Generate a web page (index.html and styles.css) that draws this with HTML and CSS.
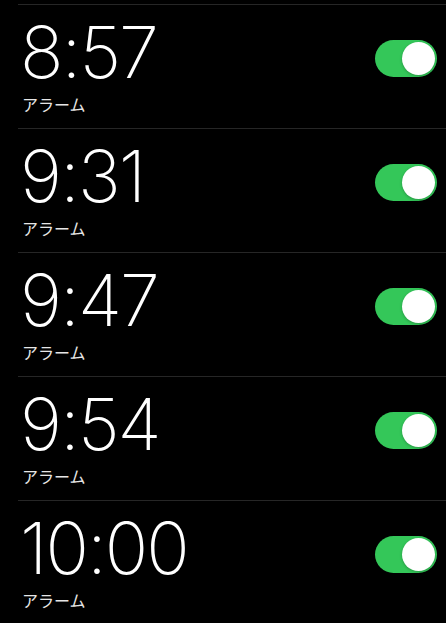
FILE: index.html
```html
<!DOCTYPE html>
<html lang="ja">
<head>
    <meta charset="UTF-8">
    <meta name="viewport" content="width=device-width, initial-scale=1.0">
    <title>アラーム</title>
    <link rel="stylesheet" href="styles.css">
</head>
<body>

<ul class="alarm-list">
    <li class="alarm">
        <div class="alarm-info">
            <div class="alarm-time">8:57</div>
            <div class="alarm-label">アラーム</div>
        </div>
        <span class="toggle on"><span class="knob"></span></span>
    </li>
    <li class="alarm">
        <div class="alarm-info">
            <div class="alarm-time">9:31</div>
            <div class="alarm-label">アラーム</div>
        </div>
        <span class="toggle on"><span class="knob"></span></span>
    </li>
    <li class="alarm">
        <div class="alarm-info">
            <div class="alarm-time">9:47</div>
            <div class="alarm-label">アラーム</div>
        </div>
        <span class="toggle on"><span class="knob"></span></span>
    </li>
    <li class="alarm">
        <div class="alarm-info">
            <div class="alarm-time">9:54</div>
            <div class="alarm-label">アラーム</div>
        </div>
        <span class="toggle on"><span class="knob"></span></span>
    </li>
    <li class="alarm">
        <div class="alarm-info">
            <div class="alarm-time">10:00</div>
            <div class="alarm-label">アラーム</div>
        </div>
        <span class="toggle on"><span class="knob"></span></span>
    </li>
</ul>

</body>
</html>
```

FILE: styles.css
```css
body {
    margin: 0;
    background: #000;
    color: #fff;
    font-family: Inter, "Noto Sans", "Noto Sans CJK JP", sans-serif;
}
.alarm-list {
    list-style: none;
    margin: 0;
    padding: 4px 0 0 0;
}
.alarm {
    display: flex;
    justify-content: space-between;
    align-items: flex-start;
    height: 123px;
    margin-left: 18px;
    padding: 0 9px 0 2px;
    border-top: 1px solid #262626;
}
.alarm-info {
    display: flex;
    flex-direction: column;
    gap: 6px;
    padding-top: 9px;
}
.alarm-time {
    font-size: 72px;
    font-weight: 200;
    line-height: 76px;
    letter-spacing: -2px;
}
.alarm-label {
    padding-left: 2px;
    font-family: "Liberation Sans", "Noto Sans CJK JP", sans-serif;
    font-size: 16px;
    line-height: 20px;
    color: #e6e6e6;
}
.toggle {
    display: flex;
    align-items: center;
    justify-content: flex-end;
    width: 62px;
    height: 37px;
    margin-top: 35px;
    padding: 2px;
    box-sizing: border-box;
    border-radius: 19px;
    background: #34c759;
}
.knob {
    width: 33px;
    height: 33px;
    border-radius: 50%;
    background: #fff;
    box-shadow: 0 1px 3px rgba(0, 0, 0, 0.25);
}
```
